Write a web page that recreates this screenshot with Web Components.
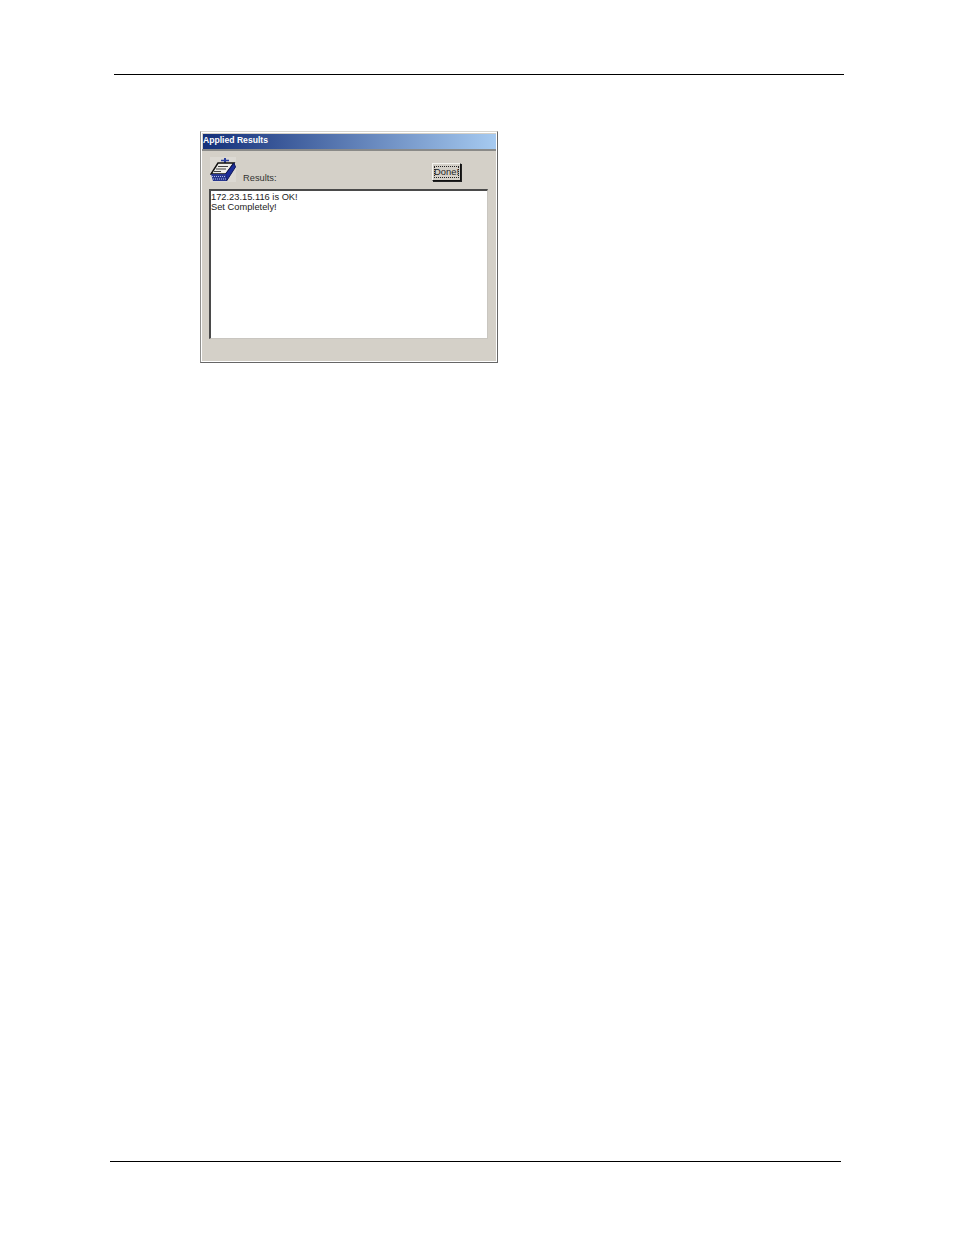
<!DOCTYPE html>
<html>
<head>
<meta charset="utf-8">
<title>Applied Results</title>
<style>
  html, body { margin: 0; background: #fff; }
  body { width: 954px; height: 1235px; overflow: hidden; font-family: "Liberation Sans", Arial, sans-serif; }
  doc-page { height: 1235px; }
</style>
</head>
<body>
<doc-page>
  <result-dialog heading="Applied Results" label="Results:" action="Done!">172.23.15.116 is OK!
Set Completely!</result-dialog>
</doc-page>

<script>
class DocPage extends HTMLElement {
  constructor() {
    super();
    const shadow = this.attachShadow({ mode: "open" });
    shadow.innerHTML = `
      <style>
        :host { display: flex; flex-direction: column; }
        .rule { height: 1px; background: #000; }
        .top { margin: 74px 0 0 114px; width: 730px; }
        .body { flex: 1; padding: 56px 0 0 200px; }
        .bottom { margin: 0 0 73px 110px; width: 731px; }
      </style>
      <div class="rule top"></div>
      <div class="body"><slot></slot></div>
      <div class="rule bottom"></div>
    `;
  }
}

class ResultDialog extends HTMLElement {
  constructor() {
    super();
    const shadow = this.attachShadow({ mode: "open" });
    shadow.innerHTML = `
      <style>
        :host {
          display: block;
          box-sizing: border-box;
          width: 298px;
          height: 232px;
          padding: 2px 1px 1px 1px;
          background: #d4d0c8;
          border: 1px solid;
          border-color: #d8d6d0 #666 #666 #8e8e8c;
          box-shadow: inset 1px 1px 0 #fff, inset -1px -1px 0 #fff;
          font: 9.3px "Liberation Sans", Arial, sans-serif;
          color: #222;
        }
        .title {
          height: 15px;
          margin-left: 1px;
          line-height: 13px;
          font-weight: bold;
          font-size: 8.6px;
          color: #fff;
          background: linear-gradient(90deg, #14307a, #a6caf0);
        }
        .tools {
          height: 40px;
          display: flex;
          align-items: flex-start;
          box-sizing: border-box;
          padding: 6px 35px 0 8px;
          border-top: 2px solid #8a8a88;
        }
        .tools svg { width: 26px; height: 25px; flex: none; }
        .label { margin: 16px 0 0 7px; flex: 1; color: #333; }
        done-button { margin-top: 6px; }
        .log {
          box-sizing: border-box;
          height: 150px;
          margin: 0 8px 0 7px;
          padding: 1px 0 0 0;
          background: #fff;
          border: 1px solid;
          border-width: 2px 1px 1px 2px;
          border-color: #4a4a4a #c9c6c0 #c9c6c0 #4a4a4a;
          white-space: pre-wrap;
          line-height: 10px;
        }
      </style>
      <div class="title" id="title"></div>
      <div class="tools">
        <svg viewBox="0 0 26 25" aria-hidden="true">
          <rect width="26" height="25" fill="#dcd9d3"/>
          <path d="M15 1v5" stroke="#2a3f9e" stroke-width="2"/>
          <path d="M11 3.500h8" stroke="#2a3f9e" stroke-width="1.500"/>
          <path d="M8 6h16l-8 11H1z" fill="#eeeeea" stroke="#111" stroke-width="1.500"/>
          <path d="M8 9.500h10M6 12h10M4 14.500h7" stroke="#444" stroke-width="1"/>
          <path d="M24 6l1.500 4-9 14-1-7z" fill="#1a2c98" stroke="#0e1758" stroke-width="1"/>
          <path d="M1 17h15l.5 7H3z" fill="#27368f"/>
          <path d="M2 19.500h13M3 22h13" stroke="#aebce4" stroke-width="1.200" stroke-dasharray="1 1"/>
        </svg>
        <span class="label" id="label"></span>
        <done-button id="action"></done-button>
      </div>
      <div class="log"><slot></slot></div>
    `;
  }

  connectedCallback() {
    const shadow = this.shadowRoot;
    shadow.querySelector("#title").textContent = this.getAttribute("heading");
    shadow.querySelector("#label").textContent = this.getAttribute("label");
    shadow.querySelector("#action").textContent = this.getAttribute("action");
  }
}

class DoneButton extends HTMLElement {
  constructor() {
    super();
    const shadow = this.attachShadow({ mode: "open" });
    shadow.innerHTML = `
      <style>
        :host {
          display: block;
          box-sizing: border-box;
          width: 29px;
          height: 18px;
          padding: 2px 1px;
          background: #d4d0c8;
          border: 1px solid;
          border-color: #f4f3ef #111 #111 #f4f3ef;
          box-shadow: 1px 1px 0 #222;
        }
        .face {
          height: 100%;
          box-sizing: border-box;
          border: 1px dotted #222;
          display: flex;
          justify-content: center;
          white-space: nowrap;
          line-height: 10px;
          font-size: 9.400px;
          color: #222;
        }
      </style>
      <div class="face"><slot></slot></div>
    `;
  }
}

customElements.define("doc-page", DocPage);
customElements.define("result-dialog", ResultDialog);
customElements.define("done-button", DoneButton);
</script>
</body>
</html>
